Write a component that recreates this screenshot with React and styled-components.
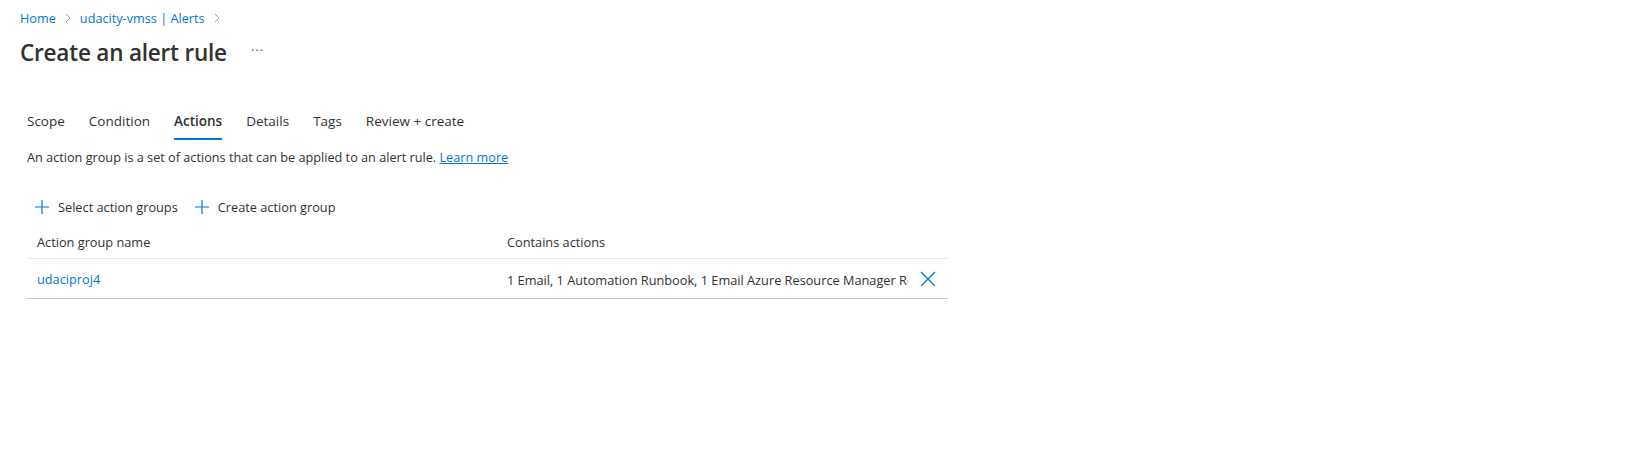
import React from 'react';
import styled, { createGlobalStyle } from 'styled-components';

const Global = createGlobalStyle`
    body {
        margin: 0;
        background: #ffffff;
        font-family: "Segoe UI", "Open Sans", "Noto Sans", sans-serif;
        color: #323130;
    }
`;

const Page = styled.div`
    padding: 8px 20px 0 20px;
    width: 1626px;
    height: 469px;
    box-sizing: border-box;
`;

const Crumbs = styled.nav`
    display: flex;
    align-items: center;
    height: 20px;
    font-size: 12.7px;
    gap: 8px;
`;

const Crumb = styled.a`
    color: #0078d4;
    text-decoration: none;
`;

const Chevron = () => (
    <svg width="8" height="10" viewBox="0 0 8 10">
        <path d="M2 1 L6 5 L2 9" fill="none" stroke="#a19f9d" strokeWidth="1" />
    </svg>
);

const TitleRow = styled.div`
    display: flex;
    align-items: center;
    margin-top: 8px;
    height: 32px;
`;

const Title = styled.h1`
    margin: 0;
    font-size: 22.5px;
    font-weight: 600;
    letter-spacing: -0.2px;
    color: #323130;
`;

const More = styled.span`
    margin-left: 24px;
    font-size: 13px;
    color: #605e5c;
    letter-spacing: 1px;
    position: relative;
    top: -2px;
`;

const Body = styled.div`
    padding-left: 7px;
    margin-top: 40px;
`;

const Tabs = styled.div`
    display: flex;
    gap: 24px;
    height: 36px;
`;

const Tab = styled.div`
    font-size: 13.5px;
    font-weight: ${p => (p.active ? 600 : 400)};
    color: #323130;
    padding-top: 4px;
    box-sizing: border-box;
    border-bottom: 2px solid ${p => (p.active ? '#0078d4' : 'transparent')};
    height: 32px;
`;

const Desc = styled.p`
    margin: 4px 0 0 0;
    font-size: 12.7px;
    color: #323130;
    a {
        color: #0078d4;
        text-decoration: underline;
    }
`;

const CommandBar = styled.div`
    display: flex;
    gap: 16px;
    margin-top: 28px;
    padding-left: 7px;
    height: 26px;
    align-items: center;
`;

const Command = styled.button`
    display: flex;
    align-items: center;
    gap: 8px;
    background: none;
    border: none;
    padding: 0;
    font-family: inherit;
    font-size: 12.75px;
    color: #323130;
`;

const Plus = () => (
    <svg width="16" height="16" viewBox="0 0 16 16">
        <path d="M8 1 V15 M1 8 H15" stroke="#0078d4" strokeWidth="1.2" fill="none" />
    </svg>
);

const Table = styled.div`
    width: 921px;
    margin-top: 6px;
    font-size: 12.75px;
`;

const Row = styled.div`
    display: grid;
    grid-template-columns: 470px 1fr 40px;
    align-items: center;
    height: ${p => p.h}px;
    border-bottom: 1px solid ${p => p.border};
    padding-left: 10px;
`;

const HeadCell = styled.div`
    font-weight: 400;
    color: #323130;
`;

const NameLink = styled.a`
    color: #0078d4;
    text-decoration: none;
`;

const Truncate = styled.div`
    white-space: nowrap;
    overflow: hidden;
    padding-top: 2px;
`;

const RemoveBtn = styled.button`
    background: none;
    border: none;
    padding: 0;
    display: flex;
    justify-content: center;
`;

const Cross = () => (
    <svg width="16" height="16" viewBox="0 0 16 16">
        <path d="M1 1 L15 15 M15 1 L1 15" stroke="#0078d4" strokeWidth="1.3" fill="none" />
    </svg>
);

export default function App() {
    const tabs = ['Scope', 'Condition', 'Actions', 'Details', 'Tags', 'Review + create'];
    return (
        <Page>
            <Global />
            <Crumbs>
                <Crumb>Home</Crumb>
                <Chevron />
                <Crumb>udacity-vmss | Alerts</Crumb>
                <Chevron />
            </Crumbs>
            <TitleRow>
                <Title>Create an alert rule</Title>
                <More>···</More>
            </TitleRow>
            <Body>
                <Tabs>
                    {tabs.map(t => (
                        <Tab key={t} active={t === 'Actions'}>{t}</Tab>
                    ))}
                </Tabs>
                <Desc>
                    An action group is a set of actions that can be applied to an alert rule. <a>Learn more</a>
                </Desc>
                <CommandBar>
                    <Command><Plus />Select action groups</Command>
                    <Command><Plus />Create action group</Command>
                </CommandBar>
                <Table>
                    <Row h={32} border="#edebe9">
                        <HeadCell>Action group name</HeadCell>
                        <HeadCell>Contains actions</HeadCell>
                        <div />
                    </Row>
                    <Row h={39} border="#c8c6c4">
                        <div><NameLink>udaciproj4</NameLink></div>
                        <Truncate>1 Email, 1 Automation Runbook, 1 Email Azure Resource Manager Role</Truncate>
                        <RemoveBtn><Cross /></RemoveBtn>
                    </Row>
                </Table>
            </Body>
        </Page>
    );
}
